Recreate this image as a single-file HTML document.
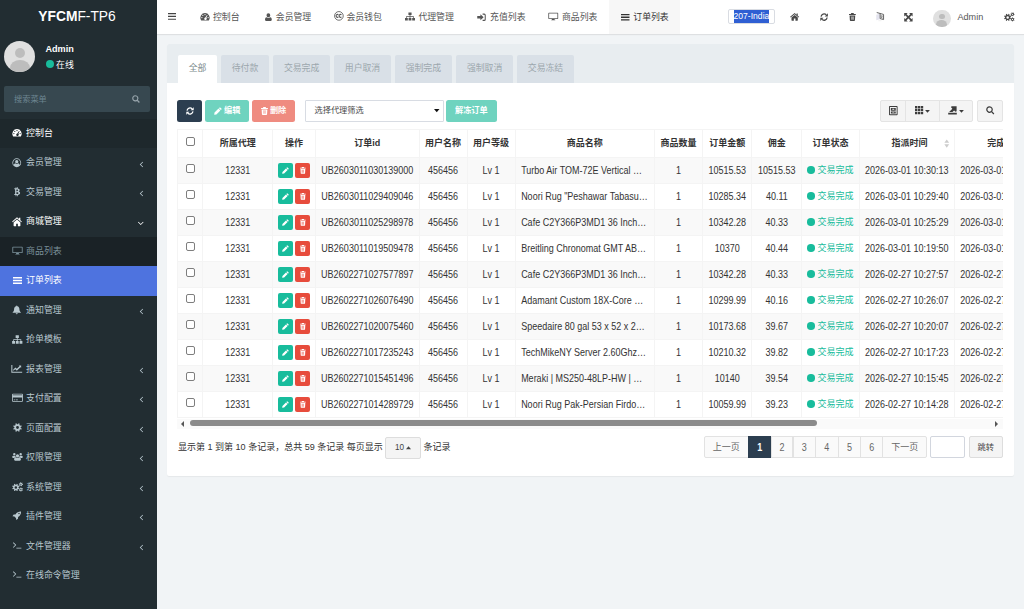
<!DOCTYPE html>
<html lang="zh-CN">
<head>
<meta charset="utf-8">
<title>YFCMF-TP6</title>
<style>
*{box-sizing:border-box;margin:0;padding:0}
html,body{width:1024px;height:609px;overflow:hidden}
body{position:relative;background:#f1f4f6;font-family:"Liberation Sans","Noto Sans CJK SC",sans-serif;font-size:9px;line-height:1.42857;color:#333}
.ic{display:inline-block;fill:currentColor;vertical-align:middle;overflow:visible}
/* sidebar */
.sidebar{position:absolute;left:0;top:0;width:157px;height:609px;background:#222d32;color:#b8c7ce}
.logo{position:absolute;left:0;top:0;width:157px;height:34px;line-height:33px;text-align:center;color:#fff;font-size:13.800px;font-weight:400;padding-right:3px}
.logo b{font-weight:700}
.avatar{position:absolute;left:4px;top:41px;width:31px;height:31px;border-radius:50%;background:#e0e0e0;overflow:hidden}
.avatar:before{content:"";position:absolute;left:10.500px;top:7px;width:10px;height:10px;border-radius:50%;background:#bdbdbd}
.avatar:after{content:"";position:absolute;left:5.500px;top:19px;width:20px;height:16px;border-radius:50%;background:#bdbdbd}
.uname{position:absolute;left:45.500px;top:43.300px;color:#fff;font-weight:700;font-size:9.100px}
.ustat{position:absolute;left:45.500px;top:58.800px;color:#fff;font-size:8.875px}
.ustat i{display:inline-block;width:8px;height:8px;border-radius:50%;background:#18bc9c;margin-right:2.600px;vertical-align:-0.700px}
.sbsearch{position:absolute;left:4px;top:86px;width:146px;height:26px;background:#374850;border-radius:2px;color:#6d8591;font-size:8.200px;line-height:28px;padding-left:10px}
.sbsearch .ic{position:absolute;right:9.700px;top:8.500px;color:#97a4ab}
.menu{position:absolute;left:0;top:119px;width:157px;list-style:none}
.menu li{position:relative;height:29.470px;line-height:29px;font-size:8.950px;color:#b8c7ce;padding-left:26px;white-space:nowrap}
.menu li .mi{position:absolute;left:11px;top:0;width:12px;height:27.700px;display:flex;align-items:center;justify-content:center}
.menu li .ar{position:absolute;right:13px;top:0;height:31.500px;display:flex;align-items:center}
.menu li.act{background:#1e282c;color:#fff}
.menu li.open{color:#fff}
.menu li.sub{background:#1a2226;color:#7b919b;padding-left:26px}
.menu li.cur{background:#4e73df;color:#fff}
/* header */
.header{position:absolute;left:157px;top:0;width:867px;height:34px;background:#fff;box-shadow:0 1px 1px rgba(0,0,0,.08);color:#444}
.header .tg{position:absolute;left:11px;top:0;height:34px;display:flex;align-items:center}
.nav{position:absolute;top:0;height:34px;line-height:34px;white-space:nowrap;color:#555;font-size:8.875px;padding-left:11.400px}
.nav .ic{margin-right:3px;vertical-align:-1px}
.nav.cur{background:#f7f7f7;color:#333}
.hi{position:absolute;top:0;height:34px;display:flex;align-items:center;color:#484848}
.hsel{position:absolute;left:571px;top:9px;width:46.500px;height:15.400px;border:1px solid #d9dce2;border-radius:2px;background:#fff}
.hsel span{position:absolute;left:4.500px;top:0;height:13.400px;line-height:13px;background:#2f5fd3;color:#fff;font-size:8.600px;padding:0;white-space:nowrap}
.havatar{position:absolute;left:776px;top:9.500px;width:17.500px;height:17.500px;border-radius:50%;background:#e0e0e0;overflow:hidden}
.havatar:before{content:"";position:absolute;left:6px;top:4px;width:5.500px;height:5.500px;border-radius:50%;background:#bdbdbd}
.havatar:after{content:"";position:absolute;left:3.200px;top:10.500px;width:11px;height:9px;border-radius:50%;background:#bdbdbd}
.hname{position:absolute;left:800.500px;top:0;line-height:35px;font-size:9.100px;color:#555}
/* panel */
.panel{position:absolute;left:167px;top:44px;width:846.500px;height:432px;background:#fff;border-radius:2px;box-shadow:0 1px 1px rgba(0,0,0,.05)}
.phead{position:absolute;left:0;top:0;width:100%;height:39px;background:#e8edf0;border-radius:2px 2px 0 0}
.tab{position:absolute;top:11.400px;height:27.600px;line-height:26.600px;text-align:center;background:#d9e0e7;color:#9ca7ad;font-size:8.875px;border-radius:2px 2px 0 0}
.tab.on{background:#fff;color:#7b8a8b}
.btn{position:absolute;top:56.400px;height:21.600px;border-radius:2.500px;font-size:8.200px;color:#fff;white-space:nowrap;display:flex;align-items:center;justify-content:center;font-weight:700}
.btn .ic{margin-right:2px}.b-ref .ic{margin:0}
.b-ref{left:10.250px;width:24.750px;background:#2c3e50}
.b-edit{left:38.250px;width:44px;background:#6fd3bf}
.b-del{left:85px;width:43.250px;background:#ef8b80}
.b-unf{left:279px;width:50.750px;background:#6fd3bf;font-weight:700}
.sel{position:absolute;left:138px;top:56.400px;width:138.500px;height:21.600px;border:1px solid #d8dce3;background:#fff;border-radius:1px;line-height:19.500px;padding-left:8.500px;font-size:8.200px;color:#4a4a4a}
.sel .ic{position:absolute;right:3.500px;top:8px;color:#111}
.tb{position:absolute;top:56.400px;height:21.600px;background:#f4f4f4;border:1px solid #e4e4e4;color:#3c3c3c;display:flex;align-items:center;justify-content:center;padding-bottom:1.600px}
/* table */
.twrap{position:absolute;left:10px;top:85px;width:826px;height:289px;overflow:hidden}
table{border-collapse:collapse;table-layout:fixed;width:900px;font-size:9px;color:#333}
th,td{border:1px solid #f4f4f4;text-align:center;white-space:nowrap;overflow:hidden;padding:0}
th{height:27.750px;font-weight:700;color:#333;background:#fff}
td{height:26px}
tbody tr:nth-child(odd) td{background:#f9f9f9}
td.nm{text-align:left;padding-left:5.500px}
td.last,th.last{text-align:left;padding-left:5.500px}
th.last{padding-left:32.500px}
.cb{display:block;width:9.250px;height:9.250px;border:1px solid #7e7e7e;border-radius:2px;background:#fff;margin:-4.500px auto 0;position:relative;left:.25px}
.ab{display:inline-flex;width:14.600px;height:14.700px;position:relative;top:.3px;border-radius:2px;align-items:center;justify-content:center;color:#fff;vertical-align:middle}
.ab-e{background:#18bc9c;margin-right:2.750px}
.ab-d{background:#e74c3c}
td.st{color:#18bc9c}
.dot{display:inline-block;width:7.500px;height:7.500px;border-radius:50%;background:#18bc9c;margin-right:2.500px;vertical-align:-0.700px}
.sort{position:absolute}
/* scrollbar */
.sbar{position:absolute;left:10px;top:374.500px;width:826px;height:10.500px;background:#fafafa}
.sbar .th{position:absolute;left:13px;top:1.600px;width:626.500px;height:6.250px;border-radius:3.200px;background:#8b8b8b}
.sbar .la{position:absolute;left:3.500px;top:2.200px;border:3px solid transparent;border-right:3.500px solid #555;border-left:0}
.sbar .ra{position:absolute;right:4.800px;top:2.200px;border:3px solid transparent;border-left:3.500px solid #555;border-right:0}
/* pagination */
.pinfo{position:absolute;left:11px;top:392.500px;height:21px;line-height:21px;font-size:9.030px;color:#333;white-space:nowrap}
.psize{position:absolute;left:218.250px;top:393px;width:35.250px;height:21.500px;background:#f4f4f4;border:1px solid #ddd;border-radius:2px;line-height:19px;text-align:center;font-size:8.200px;color:#444}
.pg{position:absolute;top:391.500px;height:22px;line-height:20px;border:1px solid #e2e2e2;background:#fafafa;color:#666;text-align:center;font-size:9px;margin-left:-1px}
.pg.on{background:#2c3e50;border-color:#2c3e50;color:#fff;font-weight:700}
.pinput{position:absolute;left:763.250px;top:391.500px;width:35px;height:22px;border:1px solid #d2d6de;background:#fff;border-radius:2px}
.pgo{position:absolute;left:801.500px;top:391.500px;width:34.500px;height:22px;border:1px solid #ddd;background:#f4f4f4;border-radius:2px;line-height:20px;text-align:center;color:#444;font-size:8.300px}

td .cb{margin-top:-3.700px}

.t{display:inline-block;transform:translateY(.55px) scaleY(1.12);transform-origin:50% 62%}

</style>
</head>
<body>

<div class="sidebar">
  <div class="logo"><b>YFCM</b>F-TP6</div>
  <div class="avatar"></div>
  <div class="uname">Admin</div>
  <div class="ustat"><i></i>在线</div>
  <div class="sbsearch">搜索菜单<svg class="ic" width="8" height="8" viewBox="0 0 14 14"><path fill-rule="evenodd" d="M5.800 .3a5.500 5.500 0 0 1 4.500 8.600l3.400 3.400-1.500 1.500-3.400-3.400A5.500 5.500 0 1 1 5.800 .3zm0 2a3.500 3.500 0 1 0 0 7 3.500 3.500 0 0 0 0-7z"/></svg></div>
  <ul class="menu">
    <li class="act"><span class="mi"><svg class="ic" width="10" height="9" viewBox="0 0 16 14"><path fill-rule="evenodd" d="M8 1.5a7.5 7.5 0 0 0-6.4 11.4c.2.3.5.5.9.5h11c.4 0 .7-.2.9-.5A7.5 7.5 0 0 0 8 1.500zM8 2.900a1 1 0 1 1 0 2 1 1 0 0 1 0-2zM4.500 4.100a1 1 0 1 1 0 2 1 1 0 0 1 0-2zM3 7.600a1 1 0 1 1 0 2 1 1 0 0 1 0-2zM13 7.600a1 1 0 1 1 0 2 1 1 0 0 1 0-2zM11.200 4.400l.9.300-1.900 4.400a2 2 0 1 1-1.700-.500z"/></svg></span>控制台</li>
    <li><span class="mi"><svg class="ic" width="9.500" height="9.500" viewBox="0 0 14 14"><path fill-rule="evenodd" d="M7 .5a6.500 6.500 0 1 1 0 13 6.500 6.500 0 0 1 0-13zm0 1.100a5.400 5.400 0 0 0-4.300 8.700c.4-1.300 1.100-2.200 2.300-2.400.5.500 1.200.8 2 .8s1.500-.3 2-.8c1.200.2 1.900 1.100 2.300 2.400A5.400 5.400 0 0 0 7 1.600zm0 1.400a2.400 2.400 0 1 1 0 4.800A2.400 2.400 0 0 1 7 3z"/></svg></span>会员管理<span class="ar"><svg class="ic" width="5" height="9" viewBox="0 0 8 14"><path d="M5.700 2.500l.9.900L3 7l3.600 3.600-.9.900L1.200 7z"/></svg></span></li>
    <li><span class="mi"><svg class="ic" width="6.500" height="9.500" viewBox="0 0 10 14"><path fill-rule="evenodd" d="M.5 1.800h2V0h1.200v1.800h.9V0h1.200v1.900c1.700.2 2.900 1 2.900 2.500 0 1-.5 1.700-1.300 2.100 1.200.3 2 1.200 2 2.500 0 1.800-1.300 2.700-3.600 2.900V14H4.600v-2h-.9v2H2.500v-2h-2v-1.500h.7c.3 0 .5-.2.500-.5V3.800c0-.300-.2-.5-.5-.5H.5zm3.200 1.600v2.700h.9c1.100 0 1.700-.4 1.700-1.400S5.700 3.400 4.600 3.400zm0 4.200v2.900h1.100c1.300 0 2-.4 2-1.500S6.100 7.600 4.800 7.600z"/></svg></span>交易管理<span class="ar"><svg class="ic" width="5" height="9" viewBox="0 0 8 14"><path d="M5.700 2.500l.9.900L3 7l3.600 3.600-.9.900L1.200 7z"/></svg></span></li>
    <li class="open"><span class="mi"><svg class="ic" width="10" height="9.500" viewBox="0 0.600 15 13" preserveAspectRatio="none"><path d="M7.500 .8L.2 6.900l.9 1 6.400-5.300 6.400 5.300.9-1-2.300-1.900V1.500h-1.900v1.900zM7.500 4L2.400 8.200v4.500c0 .4.300.7.700.7h3.100V9.900h2.600v3.500h3.100c.4 0 .7-.3.700-.7V8.200z"/></svg></span>商城管理<span class="ar"><svg class="ic" width="7.500" height="9" viewBox="0 0 12 14"><path d="M1.500 4.900l.9-.9L6 7.600 9.600 4l.9.900L6 9.400z"/></svg></span></li>
    <li class="sub"><span class="mi"><svg class="ic" width="11" height="9" viewBox="0 0 17 14"><path fill-rule="evenodd" d="M1.500 1h14a1 1 0 0 1 1 1v8a1 1 0 0 1-1 1h-5l.3 1.300h1v.9H5.200v-.9h1L6.500 11h-5a1 1 0 0 1-1-1V2a1 1 0 0 1 1-1zm.3 1.200v7.500h13.400V2.200z"/></svg></span>商品列表</li>
    <li class="sub cur"><span class="mi"><svg class="ic" width="9" height="9" viewBox="0 0 14 14"><path d="M0 1.500h14v2.300H0zM0 5.850h14v2.300H0zM0 10.200h14v2.300H0z"/></svg></span>订单列表</li>
    <li><span class="mi"><svg class="ic" width="9.500" height="9.500" viewBox="0 0 14 14"><path d="M7 .7c.5 0 .8.300.8.800v.3c1.900.4 3.100 1.900 3.100 4 0 2.700.9 4 2.100 4.900v.6H1v-.6c1.200-.9 2.100-2.200 2.100-4.900 0-2.100 1.200-3.600 3.100-4v-.3c0-.5.300-.8.800-.8zM5.500 12h3a1.500 1.500 0 0 1-3 0z"/></svg></span>通知管理<span class="ar"><svg class="ic" width="5" height="9" viewBox="0 0 8 14"><path d="M5.700 2.500l.9.900L3 7l3.600 3.600-.9.900L1.200 7z"/></svg></span></li>
    <li><span class="mi"><svg class="ic" width="10.500" height="9" viewBox="0 0 16 14"><path d="M5.500 .5h5v4H8.600v2h5.600v3H16v4h-4.500v-4h1.600V7.600H8.600v1.900h1.650v4h-4.500v-4H7.400V7.600H2.900v1.900H4.500v4H0v-4h1.800v-3h5.600v-2H5.500z"/></svg></span>抢单模板</li>
    <li><span class="mi"><svg class="ic" width="11.500" height="9.500" viewBox="0 0 17 14"><path d="M.5 1.500H2v10h14.500V13H.5zM3.200 10V8.300l3.300-3.300 2.100 2.100 3.900-3.900-1-1H15v3.500l-1.100-1.100-5.300 5.300-2.100-2.100z"/></svg></span>报表管理<span class="ar"><svg class="ic" width="5" height="9" viewBox="0 0 8 14"><path d="M5.700 2.500l.9.900L3 7l3.600 3.600-.9.900L1.200 7z"/></svg></span></li>
    <li><span class="mi"><svg class="ic" width="11" height="9.500" viewBox="0 0 16 14"><path fill-rule="evenodd" d="M1.200 1h13.600a1.200 1.200 0 0 1 1.200 1.200v9.600a1.200 1.200 0 0 1-1.200 1.200H1.200A1.200 1.200 0 0 1 0 11.800V2.200A1.200 1.200 0 0 1 1.200 1zM1.200 2.100v1.200h13.600V2.100zM1.200 6.600v5.300h13.600V6.600zM2.500 9.500h2v1.200h-2zM5.500 9.500h3v1.200h-3z"/></svg></span>支付配置<span class="ar"><svg class="ic" width="5" height="9" viewBox="0 0 8 14"><path d="M5.700 2.500l.9.900L3 7l3.600 3.600-.9.900L1.200 7z"/></svg></span></li>
    <li><span class="mi"><svg class="ic" width="9" height="9" viewBox="0 0 14 14"><path fill-rule="evenodd" d="M11.93 7.86L13.59 8.69L12.85 10.46L11.09 9.88L9.88 11.09L10.46 12.85L8.69 13.59L7.86 11.93L6.14 11.93L5.31 13.59L3.54 12.85L4.12 11.09L2.91 9.88L1.15 10.46L0.41 8.69L2.07 7.86L2.07 6.14L0.41 5.31L1.15 3.54L2.91 4.12L4.12 2.91L3.54 1.15L5.31 0.41L6.14 2.07L7.86 2.07L8.69 0.41L10.46 1.15L9.88 2.91L11.09 4.12L12.85 3.54L13.59 5.31L11.93 6.14zM4.80 7.00a2.2 2.2 0 1 0 4.4 0a2.2 2.2 0 1 0 -4.4 0z"/></svg></span>页面配置<span class="ar"><svg class="ic" width="5" height="9" viewBox="0 0 8 14"><path d="M5.700 2.500l.9.900L3 7l3.600 3.600-.9.900L1.200 7z"/></svg></span></li>
    <li><span class="mi"><svg class="ic" width="11" height="9.500" viewBox="0 0 16 14"><path d="M8 3.300a2.400 2.400 0 1 1 0 4.800 2.400 2.400 0 0 1 0-4.800zM3.300 1.600a1.800 1.800 0 1 1 0 3.600 1.800 1.800 0 0 1 0-3.600zM12.700 1.600a1.800 1.800 0 1 1 0 3.600 1.800 1.800 0 0 1 0-3.600zM5.400 7.800c.7.700 1.600 1.100 2.600 1.100s1.900-.4 2.600-1.100c1.600.2 2.400 1.600 2.400 3.300 0 1-.6 1.700-1.600 1.700H4.600c-1 0-1.600-.7-1.600-1.700 0-1.700.8-3.100 2.400-3.300zM1.400 5.400c.5.400 1.200.6 1.900.6.600 0 1.100-.1 1.500-.4.100.7.400 1.300.9 1.800-1.100.1-1.900.6-2.500 1.400H1.600C.7 8.800.2 8.300.2 7.500c0-1 .4-1.900 1.200-2.100zM14.600 5.400c.8.200 1.200 1.100 1.200 2.100 0 .8-.5 1.300-1.400 1.300h-1.600c-.6-.8-1.400-1.300-2.500-1.400.5-.5.800-1.100.9-1.800.4.300.9.400 1.500.4.700 0 1.400-.2 1.900-.6z"/></svg></span>权限管理<span class="ar"><svg class="ic" width="5" height="9" viewBox="0 0 8 14"><path d="M5.700 2.500l.9.900L3 7l3.600 3.600-.9.900L1.200 7z"/></svg></span></li>
    <li><span class="mi"><svg class="ic" width="11" height="9.500" viewBox="0 0 16 14"><path fill-rule="evenodd" d="M9.64 8.70L11.02 9.39L10.42 10.85L8.95 10.36L7.96 11.35L8.45 12.82L6.99 13.42L6.30 12.04L4.90 12.04L4.21 13.42L2.75 12.82L3.24 11.35L2.25 10.36L0.78 10.85L0.18 9.39L1.56 8.70L1.56 7.30L0.18 6.61L0.78 5.15L2.25 5.64L3.24 4.65L2.75 3.18L4.21 2.58L4.90 3.96L6.30 3.96L6.99 2.58L8.45 3.18L7.96 4.65L8.95 5.64L10.42 5.15L11.02 6.61L9.64 7.30zM3.70 8.00a1.9 1.9 0 1 0 3.8 0a1.9 1.9 0 1 0 -3.8 0zM15.19 3.10L16.10 3.34L15.87 4.47L14.94 4.34L14.27 5.09L14.52 6.00L13.42 6.37L13.07 5.50L12.08 5.30L11.42 5.97L10.55 5.20L11.13 4.46L10.81 3.50L9.90 3.26L10.13 2.13L11.06 2.26L11.73 1.51L11.48 0.60L12.58 0.23L12.93 1.10L13.92 1.30L14.58 0.63L15.45 1.40L14.87 2.14zM12.10 3.30a0.9 0.9 0 1 0 1.8 0a0.9 0.9 0 1 0 -1.8 0zM15.15 11.45L15.95 11.95L15.39 12.97L14.54 12.57L13.69 13.09L13.65 14.03L12.49 14.06L12.41 13.12L11.53 12.64L10.70 13.08L10.10 12.09L10.87 11.55L10.85 10.55L10.05 10.05L10.61 9.03L11.46 9.43L12.31 8.91L12.35 7.97L13.51 7.94L13.59 8.88L14.47 9.36L15.30 8.92L15.90 9.91L15.13 10.45zM12.10 11.00a0.9 0.9 0 1 0 1.8 0a0.9 0.9 0 1 0 -1.8 0z"/></svg></span>系统管理<span class="ar"><svg class="ic" width="5" height="9" viewBox="0 0 8 14"><path d="M5.700 2.500l.9.900L3 7l3.600 3.600-.9.900L1.200 7z"/></svg></span></li>
    <li><span class="mi"><svg class="ic" width="9.500" height="9.500" viewBox="0 0 14 14"><path fill-rule="evenodd" d="M13.300.7c.2 3.400-1.100 6-4.300 8.200l-.2 2.600-2.400 1.800-.6-2.900-2.200-2.200-2.900-.6L2.500 5.200l2.600-.2C7.300 1.800 9.900.5 13.300.7zM10.300 2.700a1 1 0 1 0 0 2 1 1 0 0 0 0-2z"/></svg></span>插件管理<span class="ar"><svg class="ic" width="5" height="9" viewBox="0 0 8 14"><path d="M5.700 2.500l.9.900L3 7l3.600 3.600-.9.900L1.200 7z"/></svg></span></li>
    <li><span class="mi"><svg class="ic" width="10" height="9" viewBox="0 0 16 14"><path d="M1.500 2.800l.9-.9L6.800 6.300 2.400 10.700l-.9-.9L5 6.300zM7 10.500h8v1.300H7z"/></svg></span>文件管理器<span class="ar"><svg class="ic" width="5" height="9" viewBox="0 0 8 14"><path d="M5.700 2.500l.9.900L3 7l3.600 3.600-.9.900L1.200 7z"/></svg></span></li>
    <li><span class="mi"><svg class="ic" width="10" height="9" viewBox="0 0 16 14"><path d="M1.500 2.800l.9-.9L6.800 6.300 2.400 10.700l-.9-.9L5 6.300zM7 10.500h8v1.300H7z"/></svg></span>在线命令管理</li>
  </ul>
</div>

<div class="header">
  <span class="tg"><svg class="ic" width="8" height="6.860" style="margin-top:-1px" viewBox="0 0 14 12"><path d="M0 0h14v2H0zM0 5h14v2H0zM0 10h14v2H0z"/></svg></span>
  <div class="nav" style="left:31.600px"><svg class="ic" width="10" height="9" viewBox="0 0 16 14"><path fill-rule="evenodd" d="M8 1.5a7.5 7.5 0 0 0-6.4 11.4c.2.3.5.5.9.5h11c.4 0 .7-.2.9-.5A7.5 7.5 0 0 0 8 1.500zM8 2.900a1 1 0 1 1 0 2 1 1 0 0 1 0-2zM4.500 4.100a1 1 0 1 1 0 2 1 1 0 0 1 0-2zM3 7.600a1 1 0 1 1 0 2 1 1 0 0 1 0-2zM13 7.600a1 1 0 1 1 0 2 1 1 0 0 1 0-2zM11.200 4.400l.9.300-1.900 4.400a2 2 0 1 1-1.700-.500z"/></svg>控制台</div>
  <div class="nav" style="left:96.300px"><svg class="ic" width="6.800" height="8.200" style="margin-right:4.300px" viewBox="0 0 12 14"><path d="M6 .3a3.300 3.300 0 0 1 3.300 3.400c0 2-1.400 3.700-3.300 3.700S2.700 5.700 2.700 3.700A3.300 3.300 0 0 1 6 .3zM2.800 7.200c.8.900 1.900 1.400 3.200 1.400s2.400-.5 3.200-1.400c2 .4 2.800 2.200 2.800 4.500 0 1.200-.8 2-1.800 2H1.800c-1 0-1.800-.8-1.800-2 0-2.300.800-4.100 2.800-4.500z"/></svg>会员管理</div>
  <div class="nav" style="left:165.500px"><svg class="ic" width="9.800" height="9.800" style="margin-right:2.700px" viewBox="0 0 14 14"><circle cx="7" cy="7" r="6.200" fill="none" stroke="currentColor" stroke-width="1.200"/><path fill="none" stroke="currentColor" stroke-width="1.500" d="M6.300 5.500a2 2 0 1 0 0 3M10.600 5.500a2 2 0 1 0 0 3"/></svg>会员钱包</div>
  <div class="nav" style="left:237px"><svg class="ic" width="10" height="9" viewBox="0 0 16 14"><path d="M5.500 .5h5v4H8.600v2h5.600v3H16v4h-4.500v-4h1.600V7.600H8.600v1.900h1.650v4h-4.500v-4H7.400V7.600H2.900v1.900H4.500v4H0v-4h1.800v-3h5.600v-2H5.500z"/></svg>代理管理</div>
  <div class="nav" style="left:308.700px"><svg class="ic" width="9" height="8.500" style="margin-right:4px" viewBox="0 0 14 14"><path d="M5.200 2L10.500 7l-5.300 5V9H0V5h5.200zM8.800 1h2.700A2.500 2.500 0 0 1 14 3.500v7a2.500 2.500 0 0 1-2.500 2.500H8.800v-1.700h2.500c.6 0 1-.4 1-1V3.700c0-.600-.4-1-1-1H8.800z"/></svg>充值列表</div>
  <div class="nav" style="left:380.100px"><svg class="ic" width="10.500" height="9" viewBox="0 0 17 14"><path fill-rule="evenodd" d="M1.500 1h14a1 1 0 0 1 1 1v8a1 1 0 0 1-1 1h-5l.3 1.300h1v.9H5.200v-.9h1L6.500 11h-5a1 1 0 0 1-1-1V2a1 1 0 0 1 1-1zm.3 1.200v7.500h13.400V2.200z"/></svg>商品列表</div>
  <div class="nav cur" style="left:452.400px;width:71px"><svg class="ic" width="8.500" height="8.500" style="margin-right:4px" viewBox="0 0 14 14"><path d="M0 1.500h14v2.300H0zM0 5.850h14v2.300H0zM0 10.200h14v2.300H0z"/></svg>订单列表</div>
  <div class="hsel"><span>207-India</span></div>
  <span class="hi" style="left:633px"><svg class="ic" width="9.300" height="7.800" preserveAspectRatio="none" style="margin-bottom:1px" viewBox="0 0.600 15 13" preserveAspectRatio="none"><path d="M7.500 .8L.2 6.900l.9 1 6.400-5.300 6.400 5.300.9-1-2.300-1.900V1.500h-1.900v1.900zM7.500 4L2.400 8.200v4.500c0 .4.300.7.700.7h3.100V9.900h2.600v3.500h3.100c.4 0 .7-.3.700-.7V8.200z"/></svg></span>
  <span class="hi" style="left:663px"><svg class="ic" width="8.200" height="8.200" viewBox="0 0 14 14"><path d="M1.800 6.300A5.300 5.300 0 0 1 10.700 3.100" fill="none" stroke="currentColor" stroke-width="2.200"/><path d="M13.500 .3v5.500H8z"/><path d="M12.200 7.700A5.300 5.300 0 0 1 3.300 10.900" fill="none" stroke="currentColor" stroke-width="2.200"/><path d="M.5 13.700V8.200H6z"/></svg></span>
  <span class="hi" style="left:691.700px"><svg class="ic" width="6.800" height="8" viewBox="0 0 12 14"><path fill-rule="evenodd" d="M4 0h4l.8 1.700H12v1.600H0V1.700h3.200zM1 4.200h10l-.5 8.500c0 .700-.6 1.300-1.300 1.300H2.800c-.7 0-1.300-.6-1.300-1.300zM3.700 5.900v5.800h.8V5.900zm1.900 0v5.800h.8V5.900zm1.900 0v5.800h.8V5.900z"/></svg></span>
  <span class="hi" style="left:719.200px"><svg class="ic" width="8.300" height="9.300" viewBox="0 0 17 19" style="margin-bottom:1px"><path d="M.5 5.500L8 3v12L.5 17z" fill="#e3e3ee"/><path d="M1.500 1L15.500 5v10.500L8.500 13.500V3.200" fill="none" stroke="#5a5a5a" stroke-width="1.900"/><path d="M10 7.600l4 1M12 7.200v1.500c0 2-1 3.400-2.400 4.300M10.400 9.600c.5 1.500 1.600 2.500 3.600 3.300" stroke="#6a6a6a" stroke-width="1.300" fill="none"/><path d="M5 17.800h6" stroke="#e0e0e0" stroke-width="1"/></svg></span>
  <span class="hi" style="left:747px"><svg class="ic" width="8.800" height="8.400" viewBox="0 0 14 14"><path d="M0 0h5.800L0 5.800zM14 0v5.800L8.200 0zM14 14H8.200L14 8.200zM0 14V8.200L5.800 14z"/><path d="M2.200 2.200l9.600 9.600M11.800 2.200l-9.600 9.600" stroke="currentColor" stroke-width="2.800" fill="none"/></svg></span>
  <div class="havatar"></div>
  <div class="hname">Admin</div>
  <span class="hi" style="left:847px"><svg class="ic" width="10.500" height="9.500" viewBox="0 0 16 14"><path fill-rule="evenodd" d="M9.64 8.70L11.02 9.39L10.42 10.85L8.95 10.36L7.96 11.35L8.45 12.82L6.99 13.42L6.30 12.04L4.90 12.04L4.21 13.42L2.75 12.82L3.24 11.35L2.25 10.36L0.78 10.85L0.18 9.39L1.56 8.70L1.56 7.30L0.18 6.61L0.78 5.15L2.25 5.64L3.24 4.65L2.75 3.18L4.21 2.58L4.90 3.96L6.30 3.96L6.99 2.58L8.45 3.18L7.96 4.65L8.95 5.64L10.42 5.15L11.02 6.61L9.64 7.30zM3.70 8.00a1.9 1.9 0 1 0 3.8 0a1.9 1.9 0 1 0 -3.8 0zM15.19 3.10L16.10 3.34L15.87 4.47L14.94 4.34L14.27 5.09L14.52 6.00L13.42 6.37L13.07 5.50L12.08 5.30L11.42 5.97L10.55 5.20L11.13 4.46L10.81 3.50L9.90 3.26L10.13 2.13L11.06 2.26L11.73 1.51L11.48 0.60L12.58 0.23L12.93 1.10L13.92 1.30L14.58 0.63L15.45 1.40L14.87 2.14zM12.10 3.30a0.9 0.9 0 1 0 1.8 0a0.9 0.9 0 1 0 -1.8 0zM15.15 11.45L15.95 11.95L15.39 12.97L14.54 12.57L13.69 13.09L13.65 14.03L12.49 14.06L12.41 13.12L11.53 12.64L10.70 13.08L10.10 12.09L10.87 11.55L10.85 10.55L10.05 10.05L10.61 9.03L11.46 9.43L12.31 8.91L12.35 7.97L13.51 7.94L13.59 8.88L14.47 9.36L15.30 8.92L15.90 9.91L15.13 10.45zM12.10 11.00a0.9 0.9 0 1 0 1.8 0a0.9 0.9 0 1 0 -1.8 0z"/></svg></span>
</div>

<div class="panel">
  <div class="phead">
    <div class="tab on" style="left:11px;width:39px">全部</div>
    <div class="tab" style="left:54.250px;width:47.500px">待付款</div>
    <div class="tab" style="left:106.250px;width:56.750px">交易完成</div>
    <div class="tab" style="left:167.250px;width:56.500px">用户取消</div>
    <div class="tab" style="left:228px;width:56.750px">强制完成</div>
    <div class="tab" style="left:289.250px;width:56.750px">强制取消</div>
    <div class="tab" style="left:350.250px;width:56.500px">交易冻结</div>
  </div>
  <div class="btn b-ref"><svg class="ic" width="8" height="8" viewBox="0 0 14 14"><path d="M1.800 6.300A5.300 5.300 0 0 1 10.700 3.100" fill="none" stroke="currentColor" stroke-width="2.200"/><path d="M13.500 .3v5.500H8z"/><path d="M12.200 7.700A5.300 5.300 0 0 1 3.300 10.900" fill="none" stroke="currentColor" stroke-width="2.200"/><path d="M.5 13.700V8.200H6z"/></svg></div>
  <div class="btn b-edit"><svg class="ic" width="8" height="8" viewBox="0 0 14 14"><path d="M10.400 .3l3.300 3.300-1.700 1.700-3.300-3.300zM7.900 2.800l3.300 3.300-7 7-3.900.6.600-3.900z"/></svg>编辑</div>
  <div class="btn b-del"><svg class="ic" width="7" height="8" viewBox="0 0 12 14"><path fill-rule="evenodd" d="M4 0h4l.8 1.700H12v1.600H0V1.700h3.200zM1 4.200h10l-.5 8.500c0 .700-.6 1.300-1.300 1.300H2.800c-.7 0-1.300-.6-1.300-1.300zM3.700 5.900v5.800h.8V5.900zm1.900 0v5.800h.8V5.900zm1.900 0v5.800h.8V5.900z"/></svg>删除</div>
  <div class="sel">选择代理筛选<svg class="ic" width="5.500" height="3.500" viewBox="0 0 8 5"><path d="M0 0h8L4 4.500z"/></svg></div>
  <div class="btn b-unf">解冻订单</div>
  <div class="tb" style="left:712.750px;width:26.500px;border-radius:2px 0 0 2px"><svg class="ic" width="8.600" height="9.300" viewBox="0 0 13 14"><path fill-rule="evenodd" d="M1.200 0h10.600c.7 0 1.200.5 1.200 1.200v11.600c0 .7-.5 1.200-1.200 1.200H1.200C.5 14 0 13.500 0 12.800V1.200C0 .5.500 0 1.200 0zm.2 1.400v11.200h10.200V1.400zm1.400 1.500h7.400v4.300H2.800zm0 5.400h7.400v3H2.800zM5 4.300v1.500h3V4.300zM5 9.300v1h3v-1z"/></svg></div>
  <div class="tb" style="left:738.250px;width:34.500px"><svg class="ic" width="8.200" height="8.400" viewBox="0 0 14 14"><path d="M0 0h4v4H0zM5 0h4v4H5zM10 0h4v4h-4zM0 5h4v4H0zM5 5h4v4H5zM10 5h4v4h-4zM0 10h4v4H0zM5 10h4v4H5zM10 10h4v4h-4z"/></svg><svg class="ic" width="5" height="3" style="margin-left:2.500px;margin-top:1.500px" viewBox="0 0 8 5"><path d="M0 0h8L4 4.500z"/></svg></div>
  <div class="tb" style="left:771.750px;width:34.500px;border-radius:0 2px 2px 0"><svg class="ic" width="9" height="8.600" viewBox="0 0 14 14"><path d="M0 10.800h14V14H0zM1.500 9.800L6.800 4.400 4.600 2.200 5.400 .3 13.700 .3 13.700 8.600 11.800 9.400 9.600 7.200 7 9.800z"/></svg><svg class="ic" width="5" height="3" style="margin-left:2.500px;margin-top:1.500px" viewBox="0 0 8 5"><path d="M0 0h8L4 4.500z"/></svg></div>
  <div class="tb" style="left:810.250px;width:25.750px;border-radius:2px"><svg class="ic" width="8.500" height="8.500" viewBox="0 0 14 14"><path fill-rule="evenodd" d="M5.800 .3a5.500 5.500 0 0 1 4.500 8.600l3.400 3.400-1.500 1.500-3.400-3.400A5.500 5.500 0 1 1 5.800 .3zm0 2a3.500 3.500 0 1 0 0 7 3.500 3.500 0 0 0 0-7z"/></svg></div>

  <div class="twrap">
  <table>
    <colgroup><col style="width:25.250px"><col style="width:69.750px"><col style="width:43px"><col style="width:103.500px"><col style="width:48px"><col style="width:48px"><col style="width:139px"><col style="width:48.500px"><col style="width:49.250px"><col style="width:49.750px"><col style="width:57.500px"><col style="width:95px"><col style="width:122px"></colgroup>
    <thead><tr>
      <th><span class="cb"></span></th><th>所属代理</th><th>操作</th><th>订单id</th><th>用户名称</th><th>用户等级</th><th>商品名称</th><th>商品数量</th><th>订单金额</th><th>佣金</th><th>订单状态</th><th style="position:relative;padding-left:5.500px">指派时间<svg class="ic sort" width="5.500" height="11" style="right:4.200px;top:8.300px;color:#ccc" viewBox="0 0 8 14"><path d="M4 1l3.500 5h-7zM4 13L.5 8h7z"/></svg></th><th class="last">完成时间</th>
    </tr></thead>
    <tbody>
<tr>
<td class="c0"><span class="cb"></span></td>
<td><span class="t">12331</span></td>
<td><span class="ab ab-e"><svg class="ic " width="7" height="7" viewBox="0 0 14 14"><path d="M10.400 .3l3.300 3.300-1.700 1.700-3.300-3.300zM7.900 2.800l3.300 3.300-7 7-3.900.6.600-3.900z"/></svg></span><span class="ab ab-d"><svg class="ic " width="5.8" height="6.8" viewBox="0 0 12 14"><path fill-rule="evenodd" d="M4 0h4l.8 1.700H12v1.600H0V1.700h3.200zM1 4.200h10l-.5 8.500c0 .700-.6 1.300-1.300 1.300H2.800c-.7 0-1.300-.6-1.300-1.300zM3.700 5.900v5.800h.8V5.900zm1.900 0v5.800h.8V5.900zm1.900 0v5.800h.8V5.900z"/></svg></span></td>
<td><span class="t">UB2603011030139000</span></td>
<td><span class="t">456456</span></td>
<td><span class="t">Lv 1</span></td>
<td class="nm"><span class="t">Turbo Air TOM-72E Vertical …</span></td>
<td><span class="t">1</span></td>
<td><span class="t">10515.53</span></td>
<td><span class="t">10515.53</span></td>
<td class="st"><i class="dot"></i>交易完成</td>
<td><span class="t">2026-03-01 10:30:13</span></td>
<td class="last"><span class="t">2026-03-01 10:31:13</span></td>
</tr>
<tr>
<td class="c0"><span class="cb"></span></td>
<td><span class="t">12331</span></td>
<td><span class="ab ab-e"><svg class="ic " width="7" height="7" viewBox="0 0 14 14"><path d="M10.400 .3l3.300 3.300-1.700 1.700-3.300-3.300zM7.900 2.800l3.300 3.300-7 7-3.900.6.600-3.900z"/></svg></span><span class="ab ab-d"><svg class="ic " width="5.8" height="6.8" viewBox="0 0 12 14"><path fill-rule="evenodd" d="M4 0h4l.8 1.700H12v1.600H0V1.700h3.200zM1 4.200h10l-.5 8.500c0 .700-.6 1.300-1.300 1.300H2.800c-.7 0-1.300-.6-1.300-1.300zM3.700 5.900v5.800h.8V5.900zm1.900 0v5.800h.8V5.900zm1.900 0v5.800h.8V5.900z"/></svg></span></td>
<td><span class="t">UB2603011029409046</span></td>
<td><span class="t">456456</span></td>
<td><span class="t">Lv 1</span></td>
<td class="nm"><span class="t">Noori Rug &quot;Peshawar Tabasu…</span></td>
<td><span class="t">1</span></td>
<td><span class="t">10285.34</span></td>
<td><span class="t">40.11</span></td>
<td class="st"><i class="dot"></i>交易完成</td>
<td><span class="t">2026-03-01 10:29:40</span></td>
<td class="last"><span class="t">2026-03-01 10:31:13</span></td>
</tr>
<tr>
<td class="c0"><span class="cb"></span></td>
<td><span class="t">12331</span></td>
<td><span class="ab ab-e"><svg class="ic " width="7" height="7" viewBox="0 0 14 14"><path d="M10.400 .3l3.300 3.300-1.700 1.700-3.300-3.300zM7.900 2.800l3.300 3.300-7 7-3.900.6.600-3.900z"/></svg></span><span class="ab ab-d"><svg class="ic " width="5.8" height="6.8" viewBox="0 0 12 14"><path fill-rule="evenodd" d="M4 0h4l.8 1.700H12v1.600H0V1.700h3.200zM1 4.200h10l-.5 8.500c0 .700-.6 1.300-1.300 1.300H2.800c-.7 0-1.300-.6-1.300-1.300zM3.700 5.900v5.800h.8V5.900zm1.900 0v5.800h.8V5.900zm1.900 0v5.800h.8V5.900z"/></svg></span></td>
<td><span class="t">UB2603011025298978</span></td>
<td><span class="t">456456</span></td>
<td><span class="t">Lv 1</span></td>
<td class="nm"><span class="t">Cafe C2Y366P3MD1 36 Inch…</span></td>
<td><span class="t">1</span></td>
<td><span class="t">10342.28</span></td>
<td><span class="t">40.33</span></td>
<td class="st"><i class="dot"></i>交易完成</td>
<td><span class="t">2026-03-01 10:25:29</span></td>
<td class="last"><span class="t">2026-03-01 10:31:13</span></td>
</tr>
<tr>
<td class="c0"><span class="cb"></span></td>
<td><span class="t">12331</span></td>
<td><span class="ab ab-e"><svg class="ic " width="7" height="7" viewBox="0 0 14 14"><path d="M10.400 .3l3.300 3.300-1.700 1.700-3.300-3.300zM7.900 2.800l3.300 3.300-7 7-3.900.6.600-3.900z"/></svg></span><span class="ab ab-d"><svg class="ic " width="5.8" height="6.8" viewBox="0 0 12 14"><path fill-rule="evenodd" d="M4 0h4l.8 1.700H12v1.600H0V1.700h3.200zM1 4.200h10l-.5 8.500c0 .700-.6 1.300-1.300 1.300H2.800c-.7 0-1.300-.6-1.300-1.300zM3.700 5.900v5.800h.8V5.900zm1.900 0v5.800h.8V5.900zm1.900 0v5.800h.8V5.900z"/></svg></span></td>
<td><span class="t">UB2603011019509478</span></td>
<td><span class="t">456456</span></td>
<td><span class="t">Lv 1</span></td>
<td class="nm"><span class="t">Breitling Chronomat GMT AB…</span></td>
<td><span class="t">1</span></td>
<td><span class="t">10370</span></td>
<td><span class="t">40.44</span></td>
<td class="st"><i class="dot"></i>交易完成</td>
<td><span class="t">2026-03-01 10:19:50</span></td>
<td class="last"><span class="t">2026-03-01 10:31:13</span></td>
</tr>
<tr>
<td class="c0"><span class="cb"></span></td>
<td><span class="t">12331</span></td>
<td><span class="ab ab-e"><svg class="ic " width="7" height="7" viewBox="0 0 14 14"><path d="M10.400 .3l3.300 3.300-1.700 1.700-3.300-3.300zM7.900 2.800l3.300 3.300-7 7-3.900.6.600-3.900z"/></svg></span><span class="ab ab-d"><svg class="ic " width="5.8" height="6.8" viewBox="0 0 12 14"><path fill-rule="evenodd" d="M4 0h4l.8 1.700H12v1.600H0V1.700h3.200zM1 4.200h10l-.5 8.500c0 .700-.6 1.300-1.300 1.300H2.800c-.7 0-1.300-.6-1.300-1.300zM3.700 5.900v5.800h.8V5.900zm1.900 0v5.800h.8V5.900zm1.900 0v5.800h.8V5.900z"/></svg></span></td>
<td><span class="t">UB2602271027577897</span></td>
<td><span class="t">456456</span></td>
<td><span class="t">Lv 1</span></td>
<td class="nm"><span class="t">Cafe C2Y366P3MD1 36 Inch…</span></td>
<td><span class="t">1</span></td>
<td><span class="t">10342.28</span></td>
<td><span class="t">40.33</span></td>
<td class="st"><i class="dot"></i>交易完成</td>
<td><span class="t">2026-02-27 10:27:57</span></td>
<td class="last"><span class="t">2026-02-27 10:31:13</span></td>
</tr>
<tr>
<td class="c0"><span class="cb"></span></td>
<td><span class="t">12331</span></td>
<td><span class="ab ab-e"><svg class="ic " width="7" height="7" viewBox="0 0 14 14"><path d="M10.400 .3l3.300 3.300-1.700 1.700-3.300-3.300zM7.900 2.800l3.300 3.300-7 7-3.900.6.600-3.900z"/></svg></span><span class="ab ab-d"><svg class="ic " width="5.8" height="6.8" viewBox="0 0 12 14"><path fill-rule="evenodd" d="M4 0h4l.8 1.700H12v1.600H0V1.700h3.200zM1 4.200h10l-.5 8.500c0 .700-.6 1.300-1.300 1.300H2.800c-.7 0-1.300-.6-1.300-1.300zM3.700 5.900v5.800h.8V5.900zm1.900 0v5.800h.8V5.900zm1.900 0v5.800h.8V5.900z"/></svg></span></td>
<td><span class="t">UB2602271026076490</span></td>
<td><span class="t">456456</span></td>
<td><span class="t">Lv 1</span></td>
<td class="nm"><span class="t">Adamant Custom 18X-Core …</span></td>
<td><span class="t">1</span></td>
<td><span class="t">10299.99</span></td>
<td><span class="t">40.16</span></td>
<td class="st"><i class="dot"></i>交易完成</td>
<td><span class="t">2026-02-27 10:26:07</span></td>
<td class="last"><span class="t">2026-02-27 10:31:13</span></td>
</tr>
<tr>
<td class="c0"><span class="cb"></span></td>
<td><span class="t">12331</span></td>
<td><span class="ab ab-e"><svg class="ic " width="7" height="7" viewBox="0 0 14 14"><path d="M10.400 .3l3.300 3.300-1.700 1.700-3.300-3.300zM7.900 2.800l3.300 3.300-7 7-3.900.6.600-3.900z"/></svg></span><span class="ab ab-d"><svg class="ic " width="5.8" height="6.8" viewBox="0 0 12 14"><path fill-rule="evenodd" d="M4 0h4l.8 1.700H12v1.600H0V1.700h3.200zM1 4.200h10l-.5 8.500c0 .700-.6 1.300-1.300 1.300H2.800c-.7 0-1.300-.6-1.300-1.300zM3.700 5.900v5.800h.8V5.900zm1.900 0v5.800h.8V5.900zm1.900 0v5.800h.8V5.900z"/></svg></span></td>
<td><span class="t">UB2602271020075460</span></td>
<td><span class="t">456456</span></td>
<td><span class="t">Lv 1</span></td>
<td class="nm"><span class="t">Speedaire 80 gal 53 x 52 x 2…</span></td>
<td><span class="t">1</span></td>
<td><span class="t">10173.68</span></td>
<td><span class="t">39.67</span></td>
<td class="st"><i class="dot"></i>交易完成</td>
<td><span class="t">2026-02-27 10:20:07</span></td>
<td class="last"><span class="t">2026-02-27 10:31:13</span></td>
</tr>
<tr>
<td class="c0"><span class="cb"></span></td>
<td><span class="t">12331</span></td>
<td><span class="ab ab-e"><svg class="ic " width="7" height="7" viewBox="0 0 14 14"><path d="M10.400 .3l3.300 3.300-1.700 1.700-3.300-3.300zM7.900 2.800l3.300 3.300-7 7-3.900.6.600-3.900z"/></svg></span><span class="ab ab-d"><svg class="ic " width="5.8" height="6.8" viewBox="0 0 12 14"><path fill-rule="evenodd" d="M4 0h4l.8 1.700H12v1.600H0V1.700h3.200zM1 4.200h10l-.5 8.500c0 .700-.6 1.300-1.300 1.300H2.800c-.7 0-1.300-.6-1.300-1.300zM3.700 5.900v5.800h.8V5.900zm1.900 0v5.800h.8V5.900zm1.900 0v5.800h.8V5.900z"/></svg></span></td>
<td><span class="t">UB2602271017235243</span></td>
<td><span class="t">456456</span></td>
<td><span class="t">Lv 1</span></td>
<td class="nm"><span class="t">TechMikeNY Server 2.60Ghz…</span></td>
<td><span class="t">1</span></td>
<td><span class="t">10210.32</span></td>
<td><span class="t">39.82</span></td>
<td class="st"><i class="dot"></i>交易完成</td>
<td><span class="t">2026-02-27 10:17:23</span></td>
<td class="last"><span class="t">2026-02-27 10:31:13</span></td>
</tr>
<tr>
<td class="c0"><span class="cb"></span></td>
<td><span class="t">12331</span></td>
<td><span class="ab ab-e"><svg class="ic " width="7" height="7" viewBox="0 0 14 14"><path d="M10.400 .3l3.300 3.300-1.700 1.700-3.300-3.300zM7.900 2.800l3.300 3.300-7 7-3.900.6.600-3.900z"/></svg></span><span class="ab ab-d"><svg class="ic " width="5.8" height="6.8" viewBox="0 0 12 14"><path fill-rule="evenodd" d="M4 0h4l.8 1.700H12v1.600H0V1.700h3.200zM1 4.200h10l-.5 8.500c0 .700-.6 1.300-1.300 1.300H2.800c-.7 0-1.300-.6-1.300-1.300zM3.700 5.900v5.800h.8V5.900zm1.900 0v5.800h.8V5.900zm1.900 0v5.800h.8V5.900z"/></svg></span></td>
<td><span class="t">UB2602271015451496</span></td>
<td><span class="t">456456</span></td>
<td><span class="t">Lv 1</span></td>
<td class="nm"><span class="t">Meraki | MS250-48LP-HW | …</span></td>
<td><span class="t">1</span></td>
<td><span class="t">10140</span></td>
<td><span class="t">39.54</span></td>
<td class="st"><i class="dot"></i>交易完成</td>
<td><span class="t">2026-02-27 10:15:45</span></td>
<td class="last"><span class="t">2026-02-27 10:31:13</span></td>
</tr>
<tr>
<td class="c0"><span class="cb"></span></td>
<td><span class="t">12331</span></td>
<td><span class="ab ab-e"><svg class="ic " width="7" height="7" viewBox="0 0 14 14"><path d="M10.400 .3l3.300 3.300-1.700 1.700-3.300-3.300zM7.900 2.800l3.300 3.300-7 7-3.900.6.600-3.900z"/></svg></span><span class="ab ab-d"><svg class="ic " width="5.8" height="6.8" viewBox="0 0 12 14"><path fill-rule="evenodd" d="M4 0h4l.8 1.700H12v1.600H0V1.700h3.200zM1 4.200h10l-.5 8.500c0 .700-.6 1.300-1.300 1.300H2.800c-.7 0-1.300-.6-1.300-1.300zM3.700 5.900v5.800h.8V5.900zm1.900 0v5.800h.8V5.900zm1.900 0v5.800h.8V5.900z"/></svg></span></td>
<td><span class="t">UB2602271014289729</span></td>
<td><span class="t">456456</span></td>
<td><span class="t">Lv 1</span></td>
<td class="nm"><span class="t">Noori Rug Pak-Persian Firdo…</span></td>
<td><span class="t">1</span></td>
<td><span class="t">10059.99</span></td>
<td><span class="t">39.23</span></td>
<td class="st"><i class="dot"></i>交易完成</td>
<td><span class="t">2026-02-27 10:14:28</span></td>
<td class="last"><span class="t">2026-02-27 10:31:13</span></td>
</tr>
    </tbody>
  </table>
  </div>
  <div class="sbar"><i class="la"></i><i class="th"></i><i class="ra"></i></div>

  <div class="pinfo">显示第 1 到第 10 条记录，总共 59 条记录 每页显示</div>
  <div class="psize">10<svg class="ic" width="5" height="3.200" style="margin-left:1.800px;vertical-align:1px" viewBox="0 0 8 5"><path d="M0 5h8L4 .5z"/></svg></div>
  <div class="pinfo" style="left:256.500px">条记录</div>
  <div class="pg" style="left:537.500px;width:45.500px;border-radius:2px 0 0 2px">上一页</div>
  <div class="pg on" style="left:582px;width:23.600px"><span class="t">1</span></div>
  <div class="pg" style="left:604.600px;width:22.900px"><span class="t">2</span></div>
  <div class="pg" style="left:626.500px;width:23.500px"><span class="t">3</span></div>
  <div class="pg" style="left:649px;width:23.600px"><span class="t">4</span></div>
  <div class="pg" style="left:671.600px;width:23.600px"><span class="t">5</span></div>
  <div class="pg" style="left:694.200px;width:23.200px"><span class="t">6</span></div>
  <div class="pg" style="left:716.400px;width:44.500px;border-radius:0 2px 2px 0">下一页</div>
  <div class="pinput"></div>
  <div class="pgo">跳转</div>
</div>

</body>
</html>
